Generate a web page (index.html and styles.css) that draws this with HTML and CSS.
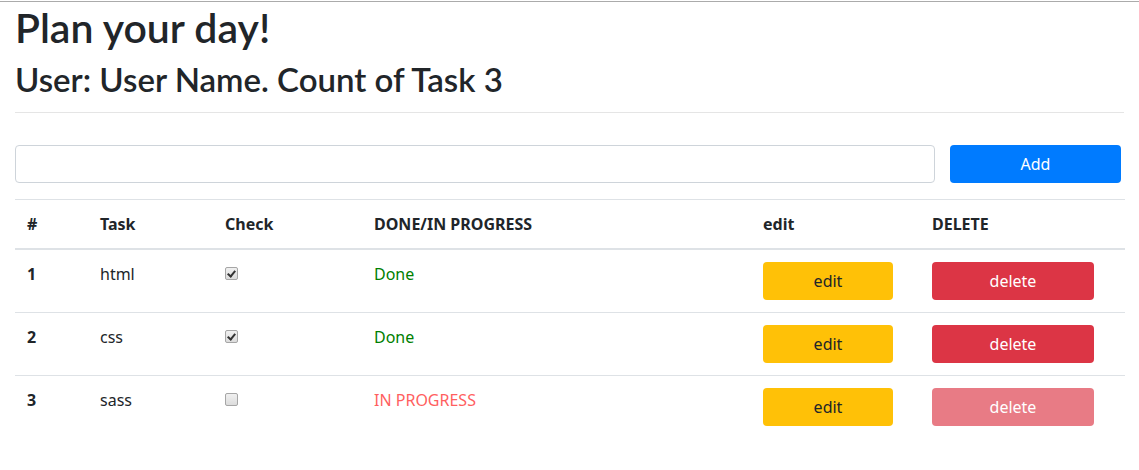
FILE: index.html
```html
<!DOCTYPE html>
<html lang="en">
<head>
<meta charset="utf-8">
<title>Plan your day!</title>
<link rel="stylesheet" href="styles.css">
</head>
<body>
<div class="page">
  <h1 class="title">Plan your day!</h1>
  <h2 class="subtitle">User: User Name. Count of Task 3</h2>
  <hr class="divider">
  <form class="add-form">
    <input class="task-input" type="text">
    <button type="button" class="btn btn-primary">Add</button>
  </form>
  <table class="tasks">
    <colgroup>
      <col class="c-num"><col class="c-task"><col class="c-check"><col class="c-status"><col class="c-edit"><col class="c-delete">
    </colgroup>
    <thead>
      <tr><th>#</th><th>Task</th><th>Check</th><th>DONE/IN PROGRESS</th><th>edit</th><th>DELETE</th></tr>
    </thead>
    <tbody>
      <tr>
        <th>1</th><td>html</td>
        <td><input class="check" type="checkbox" checked></td>
        <td class="done">Done</td>
        <td><button type="button" class="btn btn-edit">edit</button></td>
        <td><button type="button" class="btn btn-delete">delete</button></td>
      </tr>
      <tr>
        <th>2</th><td>css</td>
        <td><input class="check" type="checkbox" checked></td>
        <td class="done">Done</td>
        <td><button type="button" class="btn btn-edit">edit</button></td>
        <td><button type="button" class="btn btn-delete">delete</button></td>
      </tr>
      <tr>
        <th>3</th><td>sass</td>
        <td><input class="check" type="checkbox"></td>
        <td class="progress">IN PROGRESS</td>
        <td><button type="button" class="btn btn-edit">edit</button></td>
        <td><button type="button" class="btn btn-delete is-disabled">delete</button></td>
      </tr>
    </tbody>
  </table>
</div>
</body>
</html>
```
FILE: styles.css
```css
* { box-sizing: border-box; }
html, body { margin: 0; padding: 0; background: #fff; }
body {
  font-family: "Noto Sans", "Open Sans", sans-serif;
  font-size: 16px;
  line-height: 24px;
  color: #212529;
  padding-top: 1px;
}
.page {
  border-top: 1px solid #ababab;
  padding: 0 15px;
}
.title {
  margin: 0 0 8px;
  padding-top: 2px;
  font-family: "Lato", "Noto Sans", sans-serif;
  font-size: 41px;
  line-height: 48px;
  font-weight: 600;
}
.subtitle {
  margin: 0;
  padding-top: 0;
  font-family: "Lato", "Noto Sans", sans-serif;
  font-size: 33px;
  line-height: 38px;
  font-weight: 600;
}
.divider {
  margin: 14px 0 32px;
  border: 0;
  border-top: 1px solid rgba(0,0,0,.1);
  height: 0;
}
.add-form {
  display: grid;
  grid-template-columns: 920px 171px;
  column-gap: 15px;
  margin: 0 0 16px;
}
.task-input {
  height: 38px;
  border: 1px solid #ced4da;
  border-radius: 4px;
  padding: 6px 12px;
  font: inherit;
}
.btn {
  display: block;
  height: 38px;
  border: 1px solid transparent;
  border-radius: 4px;
  padding: 6px 12px;
  font: inherit;
  font-size: 16px;
  line-height: 24px;
  text-align: center;
  cursor: pointer;
}
.btn-primary { background: #007bff; color: #fff; width: 171px; }
.btn-edit { background: #ffc107; color: #212529; width: 130px; }
.btn-delete { background: #dc3545; color: #fff; width: 162px; }
.btn-delete.is-disabled { opacity: .65; }

.tasks {
  width: 1110px;
  border-collapse: collapse;
  table-layout: fixed;
}
.c-num { width: 73px; }
.c-task { width: 125px; }
.c-check { width: 149px; }
.c-status { width: 389px; }
.c-edit { width: 169px; }
.c-delete { width: 205px; }
.tasks th, .tasks td {
  padding: 12px;
  text-align: left;
  vertical-align: top;
  border-top: 1px solid #dee2e6;
  font-size: 16px;
  line-height: 24px;
}
.tasks thead th {
  font-weight: 700;
  border-bottom: 2px solid #dee2e6;
}
.tasks tbody th { font-weight: 700; }
.done { color: #008000; }
.progress { color: #ff5f5f; }
.check {
  -webkit-appearance: none;
  appearance: none;
  display: block;
  width: 13px;
  height: 13px;
  margin: 5px 0 0 0;
  border: 1px solid #a6a6a6;
  border-radius: 2px;
  background: linear-gradient(#f0f0f0, #dcdcdc);
  position: relative;
}
.check:checked::after {
  content: "";
  position: absolute;
  left: 3px;
  top: 1px;
  width: 3px;
  height: 6px;
  border: solid #333;
  border-width: 0 2px 2px 0;
  transform: rotate(40deg);
}
```
